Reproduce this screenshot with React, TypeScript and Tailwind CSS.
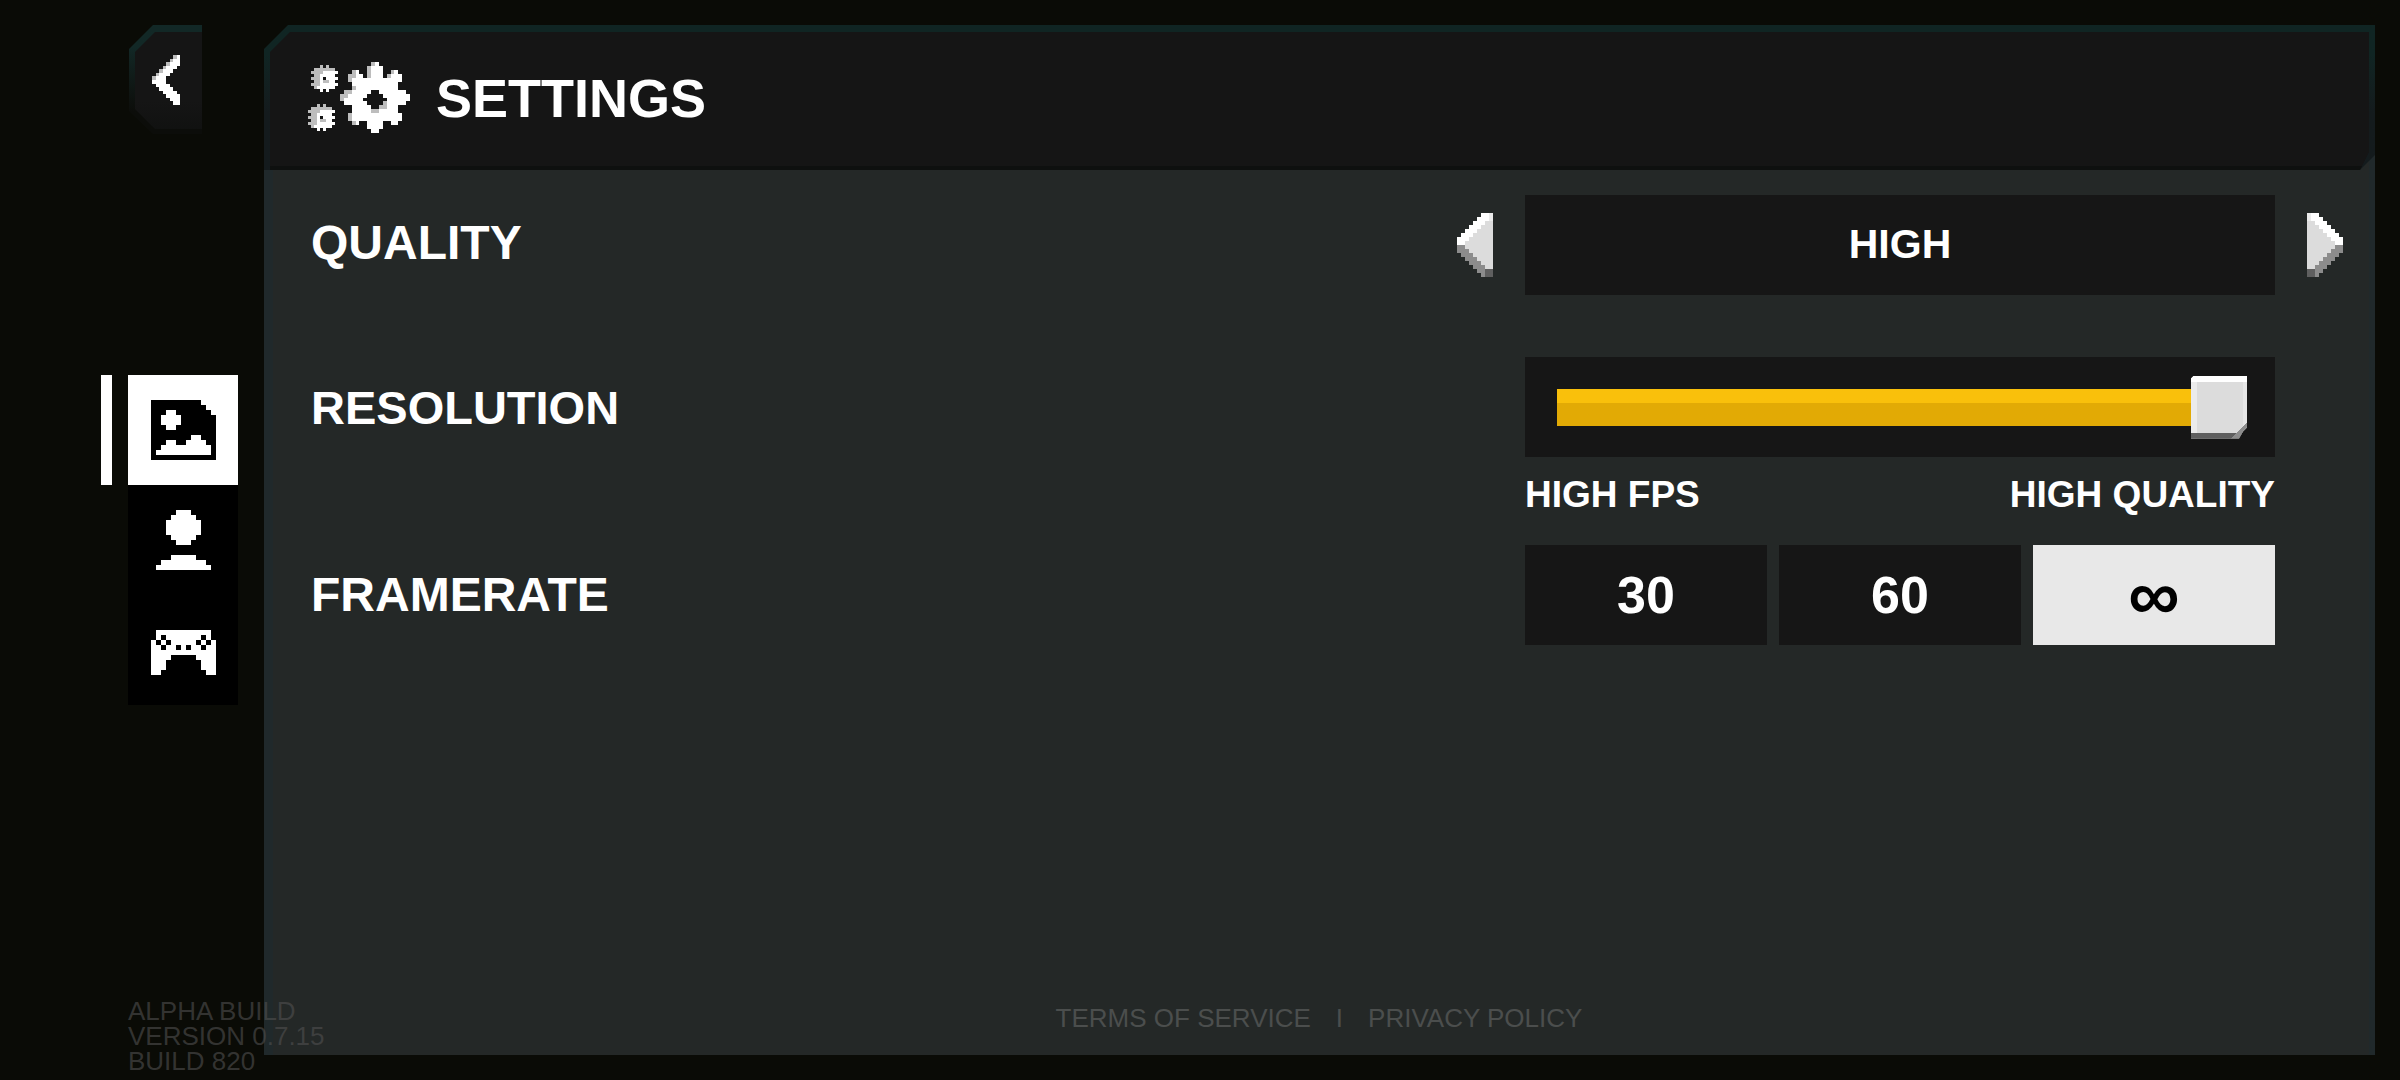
import { useState } from 'react';
import { clsx } from 'clsx';

const COLORS: Record<string, string> = {
  W: '#ffffff',
  l: '#ebebeb',
  b: '#dcdcdc',
  g: '#bdbdbd',
  m: '#8c8c8c',
  d: '#5f5f5f',
  K: '#000000',
};

const BIG_GEAR = [
  '........gW........',
  '.......gWWW.......',
  '...gW..gWWW..gW...',
  '..ggWW.gWWW.gWWW..',
  '..gWWWWWWWWWWWWW..',
  '...WWWWWWWWWWWW...',
  '...gWWWWWWWWWWW...',
  '.ggWWWWW..WWWWWWW.',
  'ggWWWWW....WWWWWWW',
  'gWWWWW......WWWWWW',
  '.WWWWWW....gWWWWW.',
  '...WWWWW..ggWWW...',
  '...WWWWWggWWWWW...',
  '..gWWWWWWWWWWWWW..',
  '..gWWWWWWWWWWWWW..',
  '...gW..WWWW..WW...',
  '.......WWWW.......',
  '........WW........',
];

const SMALL_GEAR = [
  '...g.g...',
  '.ggggggg.',
  'ggggWWWWW',
  '.ggWWWWW.',
  'gggW.WWWW',
  '.ggWggWW.',
  'gggWWWWWW',
  '.gWWWWWW.',
  '...W.W...',
];

const CHEVRON = [
  '......gW',
  '.....gWW',
  '....gWWW',
  '...gWWW.',
  '..gWWW..',
  '.gWWW...',
  'gWWW....',
  'WWWW....',
  '.WWWW...',
  '..WWWW..',
  '...WWWW.',
  '....WWWW',
  '.....WWW',
  '......WW',
];

const ARROW = [
  '......WWl',
  '.....WWWl',
  '....WWWbb',
  '...WWWbbb',
  '..WWWbbbb',
  '.WWWbbbbb',
  'WWWbbbbbb',
  'WWbbbbbbb',
  'mmbbbbbbb',
  'mmmbbbbbb',
  '.mmmbbbbb',
  '..mmmbbbb',
  '...mmmbbb',
  '....mmmbb',
  '.....mmdd',
  '......mdd',
];

const PICTURE = [
  'KKKKKKKKKK...',
  'KKKKKKKKKKK..',
  'KKK..KKKKKKK.',
  'KK....KKKKKKK',
  'KK....KKKKKKK',
  'KKK..KKKKKKKK',
  'KKKKKKKKKKKKK',
  'KKKKKKKK..KKK',
  'KKK..KK....KK',
  'KK..........K',
  'K...........K',
  'KKKKKKKKKKKKK',
];

const PERSON = [
  '.....WWW.....',
  '....WWWWW....',
  '...WWWWWWW...',
  '...WWWWWWW...',
  '...WWWWWWW...',
  '....WWWWW....',
  '.....WWW.....',
  '.............',
  '.............',
  '....WWWWW....',
  '..WWWWWWWWW..',
  '.WWWWWWWWWWW.',
];

const GAMEPAD = [
  '.............',
  '.............',
  '.WWWWWWWWWWW.',
  '.W.WWWWWWW.W.',
  'W.W.WWWWW.W.W',
  'WW.WW.W.WW.WW',
  'WWWWWWWWWWWWW',
  'WWWW.....WWWW',
  'WWW.......WWW',
  'WWW.......WWW',
  'WW.........WW',
  '.............',
];

type SpriteProps = {
  rows: string[];
  className?: string;
  x?: number;
  y?: number;
  width?: number;
  height?: number;
};

const Sprite = ({ rows, ...rest }: SpriteProps) => (
  <svg
    viewBox={`0 0 ${rows[0].length} ${rows.length}`}
    preserveAspectRatio="none"
    shapeRendering="crispEdges"
    aria-hidden="true"
    {...rest}
  >
    {rows.flatMap((row, y) =>
      [...row].map((cell, x) =>
        cell === '.' ? null : (
          <rect key={`${x}-${y}`} x={x} y={y} width={1} height={1} fill={COLORS[cell]} />
        ),
      ),
    )}
  </svg>
);

const TABS = [
  { id: 'graphics', label: 'Graphics', icon: PICTURE },
  { id: 'account', label: 'Account', icon: PERSON },
  { id: 'controls', label: 'Controls', icon: GAMEPAD },
];

const QUALITIES = ['LOW', 'MEDIUM', 'HIGH'];
const FRAMERATES = ['30', '60', '∞'];

const App = () => {
  const [tab, setTab] = useState('graphics');
  const [quality, setQuality] = useState(2);
  const [resolution, setResolution] = useState(100);
  const [framerate, setFramerate] = useState('∞');

  const stepQuality = (step: number) =>
    setQuality((quality + step + QUALITIES.length) % QUALITIES.length);

  return (
    <div className="relative flex min-h-screen bg-[#0a0b06] py-[25px] pr-[25px] font-['Liberation_Sans',Arial,sans-serif] font-bold text-white">
      {/* Side column */}
      <aside className="grid w-[264px] shrink-0 grid-rows-[1fr_auto_1fr] pl-[101px]">
        <button
          type="button"
          aria-label="Back"
          className="ml-7 h-[109px] w-[73px] self-start bg-linear-to-b from-[#122826] from-20% to-[#0c0d0a] to-80% [clip-path:polygon(24px_0,100%_0,100%_100%,24px_100%,0_86px,0_24px)]"
        >
          <span className="flex h-full items-center justify-center bg-linear-to-b from-[#151515] from-70% to-[#101110] [clip-path:polygon(26px_7px,100%_7px,100%_104px,26px_104px,6px_84px,6px_27px)]">
            <Sprite rows={CHEVRON} className="h-[50px] w-7" />
          </span>
        </button>

        <nav className="flex flex-col">
          {TABS.map(({ id, label, icon }) => (
            <div key={id} className="flex gap-4">
              <span className={clsx('w-[11px]', tab === id && 'bg-white')} />
              <button
                type="button"
                aria-label={label}
                onClick={() => setTab(id)}
                className={clsx(
                  'flex size-[110px] items-center justify-center',
                  tab === id ? 'bg-white' : 'bg-black',
                )}
              >
                <Sprite rows={icon} className="h-[60px] w-[65px]" />
              </button>
            </div>
          ))}
        </nav>
      </aside>

      {/* Settings panel */}
      <main className="flex min-w-0 flex-1 flex-col">
        <header className="relative z-10 h-[145px] bg-linear-to-b from-[#102523] from-20% to-[#141b1d] to-60% [clip-path:polygon(24px_0,100%_0,100%_calc(100%-15px),calc(100%-15px)_100%,0_100%,0_24px)]">
          <div className="flex h-full items-center gap-[26px] border-b-4 border-[#0e100f] bg-[#151515] pt-1 pl-11 [clip-path:polygon(26px_7px,calc(100%-6px)_7px,calc(100%-6px)_calc(100%-18px),calc(100%-15px)_100%,6px_100%,6px_27px)]">
            <svg viewBox="0 0 102 71" className="h-[71px] w-[102px]" aria-hidden="true">
              <Sprite rows={SMALL_GEAR} x={3} y={3} width={27} height={27} />
              <Sprite rows={SMALL_GEAR} x={0} y={42} width={27} height={27} />
              <Sprite rows={BIG_GEAR} x={32} y={0} width={70} height={71} />
            </svg>
            <h1 className="text-[54px] leading-none">SETTINGS</h1>
          </div>
        </header>

        <section className="-mt-4 flex flex-1 flex-col border-r-[6px] border-l-[9px] border-[#20292b] bg-[#242827] pt-[41px] pr-[94px] pl-[38px]">
          <div className="flex items-center justify-between" role="group" aria-labelledby="quality">
            <span id="quality" className="pb-1 text-[48px] leading-none">
              QUALITY
            </span>
            <div className="-mr-[68px] flex w-[886px] items-center gap-8">
              <button type="button" aria-label="Lower quality" onClick={() => stepQuality(-1)}>
                <Sprite rows={ARROW} className="h-16 w-9" />
              </button>
              <output className="flex h-[100px] flex-1 items-center justify-center bg-[#161616] text-[41px]">
                {QUALITIES[quality]}
              </output>
              <button type="button" aria-label="Higher quality" onClick={() => stepQuality(1)}>
                <Sprite rows={ARROW} className="h-16 w-9 -scale-x-100" />
              </button>
            </div>
          </div>

          <div className="mt-[62px] flex justify-between">
            <label htmlFor="resolution" className="flex h-[100px] items-center text-[47px] leading-none">
              RESOLUTION
            </label>
            <div className="w-[750px]">
              <div className="flex h-[100px] items-center bg-[#161616] pr-7 pl-8">
                <div className="relative flex h-[63px] flex-1 items-center">
                  <div
                    className="h-[37px] bg-linear-to-b from-[#f9c00b] from-38% to-[#e2aa05] to-38%"
                    style={{ width: `${resolution}%` }}
                  />
                  <input
                    id="resolution"
                    type="range"
                    value={resolution}
                    onChange={(e) => setResolution(Number(e.target.value))}
                    className="absolute inset-0 h-full w-full appearance-none bg-transparent [&::-webkit-slider-thumb]:h-[63px] [&::-webkit-slider-thumb]:w-14 [&::-webkit-slider-thumb]:appearance-none [&::-webkit-slider-thumb]:bg-[linear-gradient(135deg,transparent_86%,#8c8c8c_86%),linear-gradient(#fff_6px,transparent_6px,transparent_57px,#5f5f5f_57px),linear-gradient(90deg,#ebebeb_6px,#dcdcdc_6px,#dcdcdc_52px,#e6e6e6_52px)] [&::-webkit-slider-thumb]:[clip-path:polygon(3px_0,100%_0,100%_52px,52px_56px,48px_100%,0_100%,0_3px)]"
                  />
                </div>
              </div>
              <div className="flex justify-between pt-5 pb-8 text-[37px] leading-9">
                <span>HIGH FPS</span>
                <span>HIGH QUALITY</span>
              </div>
            </div>
          </div>

          <div className="flex items-center justify-between" role="group" aria-labelledby="framerate">
            <span id="framerate" className="text-[48px] leading-none">
              FRAMERATE
            </span>
            <div className="grid w-[750px] grid-cols-3 gap-3">
              {FRAMERATES.map((rate) => (
                <button
                  key={rate}
                  type="button"
                  aria-pressed={framerate === rate}
                  onClick={() => setFramerate(rate)}
                  className={clsx(
                    'h-[100px] leading-none',
                    rate === '∞' ? 'text-[72px]' : 'text-[52px]',
                    framerate === rate ? 'bg-[#e8e8e8] text-black' : 'bg-[#161616]',
                  )}
                >
                  {rate}
                </button>
              ))}
            </div>
          </div>

          <footer className="mt-auto flex justify-center gap-[25px] pb-6 pl-[52px] text-[26px] leading-[26px] font-normal text-[#4b4e4d]">
            <a href="#terms">TERMS OF SERVICE</a>
            <span>I</span>
            <a href="#privacy">PRIVACY POLICY</a>
          </footer>
        </section>
      </main>

      {/* Build info, drawn over the panel corner */}
      <p className="pointer-events-none absolute bottom-1.5 left-32 z-20 text-[26px] leading-[25px] font-normal text-[#505050]/60">
        ALPHA BUILD
        <br />
        VERSION 0.7.15
        <br />
        BUILD 820
      </p>
    </div>
  );
};

export default App;
